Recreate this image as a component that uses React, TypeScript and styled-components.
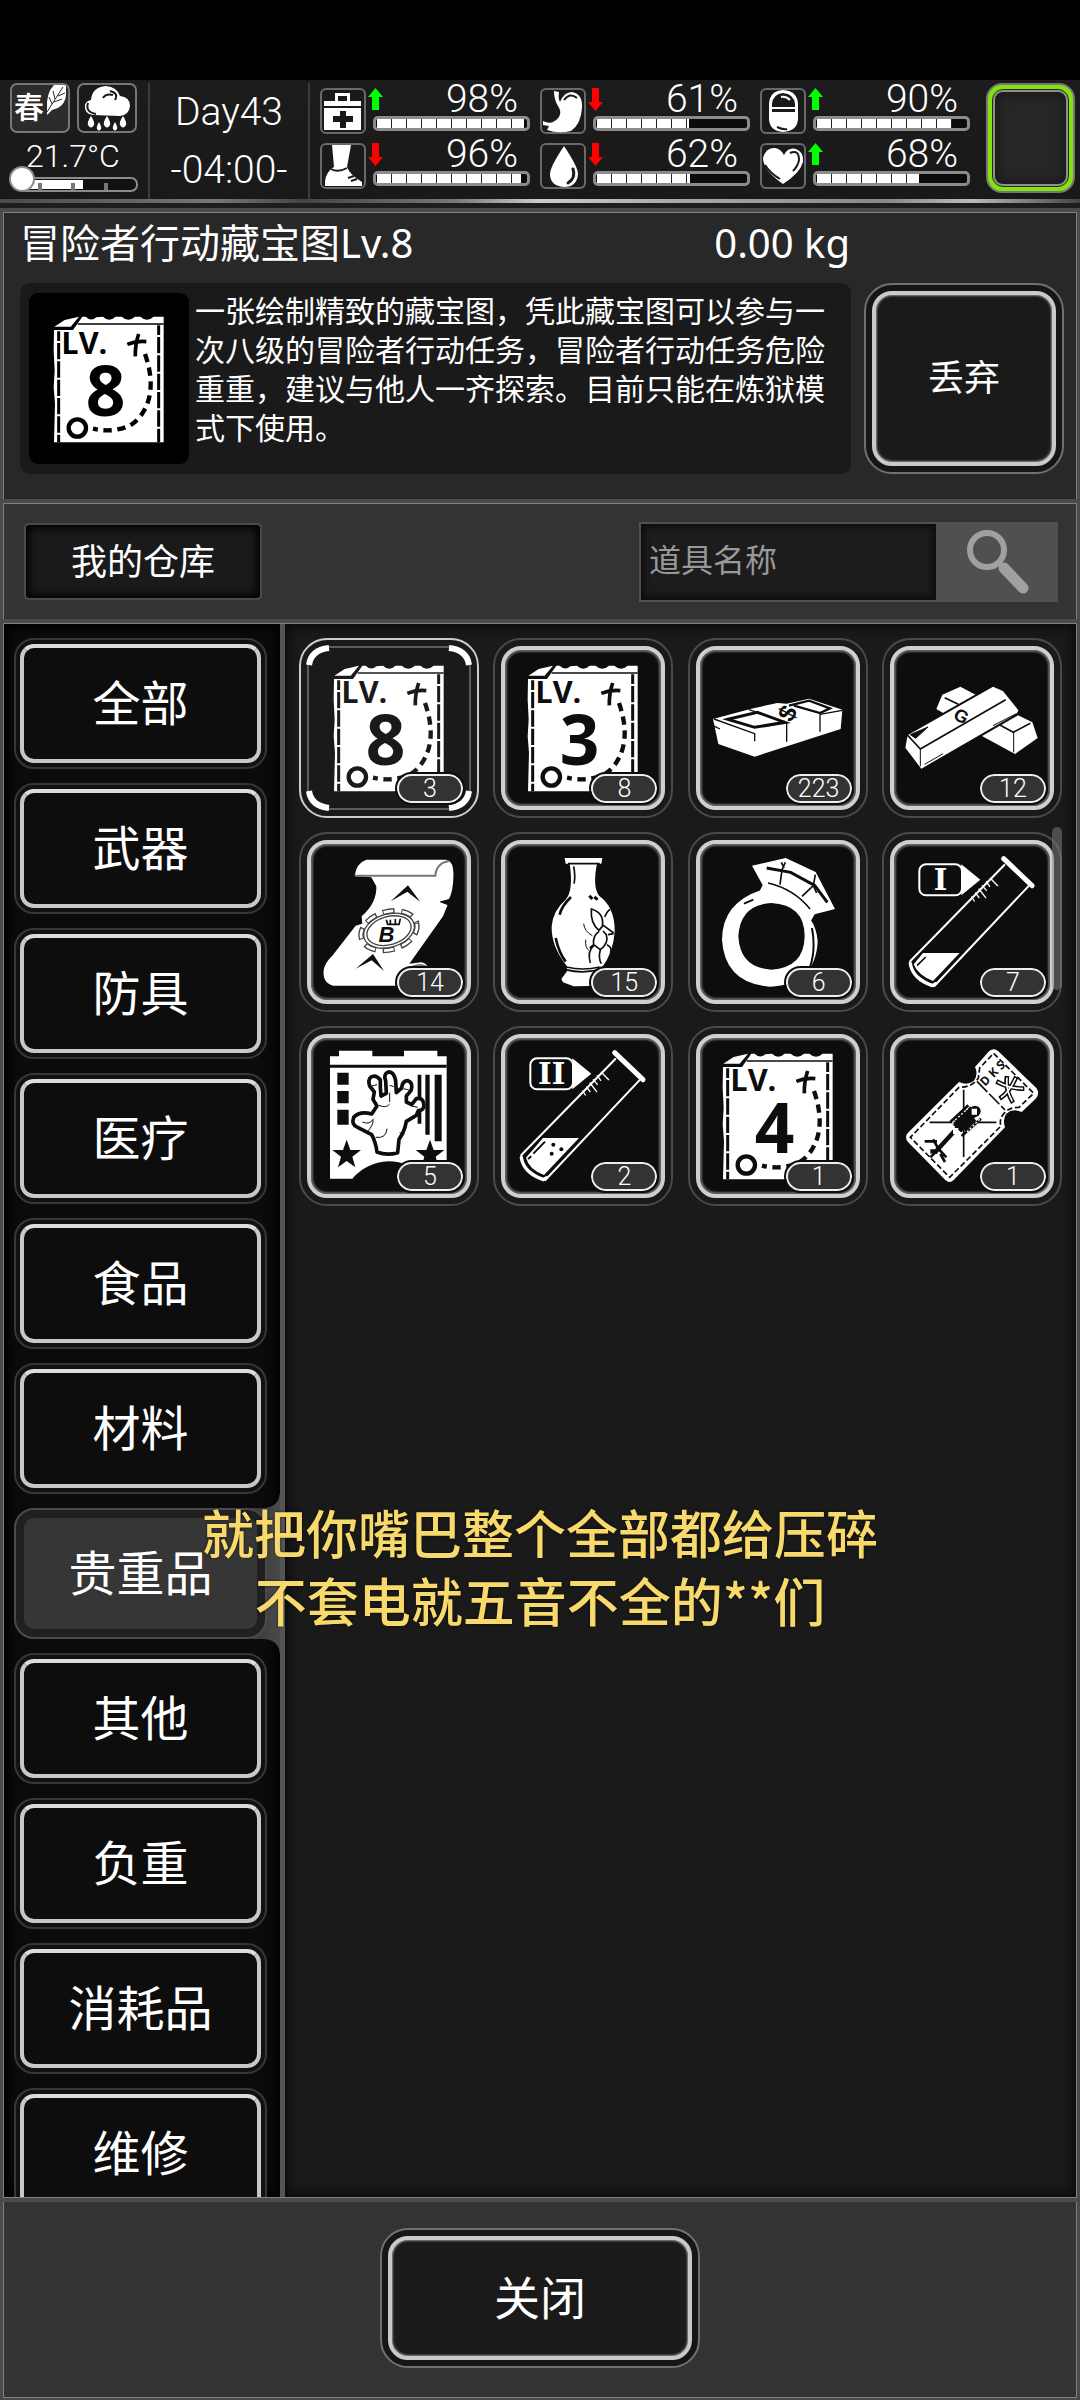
import React, { useState } from "react";
import styled, { createGlobalStyle, css } from "styled-components";

const GlobalStyle = createGlobalStyle`
  * { box-sizing: border-box; }
  html, body { margin: 0; background: #000; }
  body, button, input { font-family: "Noto Sans", "Noto Sans CJK SC", sans-serif; color: #fff; font-weight: 400; }
  button { padding: 0; margin: 0; border: 0; cursor: pointer; }
`;

const Screen = styled.div`
  height: 100vh;
  display: flex;
  flex-direction: column;
  background: #000;
  padding-top: 80px;
`;

/* ---------- status header ---------- */

const Header = styled.header`
  display: flex;
  gap: 10px;
  height: 119px;
  padding: 3px 5px 0 8px;
  background: linear-gradient(#1c1c1c, #191919);
`;

const HeaderEdge = styled.div`
  height: 9px;
  flex: none;
  border-bottom: 5px solid #1e1e1e;
  background: linear-gradient(90deg, #4a4a4a, #777 20%, #444 28%, #777 42%, #ccc 50%, #aaa 62%, #888 82%, #bbb 90%, #444);
`;

const Climate = styled.section`
  width: 130px;
  display: flex;
  flex-direction: column;
`;

const ClimateTiles = styled.div`
  display: flex;
  gap: 7px;
  padding-left: 2px;
`;

const ClimateTile = styled.div<{ $lit?: boolean }>`
  display: flex;
  align-items: center;
  width: 60px;
  height: 50px;
  border: 2px solid #777;
  border-radius: 7px;
  background: ${(p) => (p.$lit ? "#2c2c2c" : "#1a1a1a")};
  font-size: 30px;
  line-height: 40px;
  font-weight: 500;
  padding-left: ${(p) => (p.$lit ? "2px" : "0")};
  overflow: hidden;
  svg { flex: none; }
`;

const Season = styled.span`
  height: 46px;
  line-height: 44px;
`;

const Temperature = styled.div`
  height: 33px;
  text-align: center;
  font: 300 32px/46px Roboto, "Noto Sans", sans-serif;
`;

const Clock = styled.section`
  width: 162px;
  border: solid #3c3c3c;
  border-width: 0 2px;
  text-align: center;
  font: 300 39px/58px Roboto, "Noto Sans", sans-serif;
`;

const Stats = styled.section`
  display: grid;
  grid-template-columns: repeat(3, 211px);
  grid-auto-rows: 46px;
  column-gap: 9px;
  row-gap: 9px;
  padding-top: 5px;
`;

const Stat = styled.div`
  display: flex;
  gap: 2px;
`;

const StatIcon = styled.div`
  width: 46px;
  height: 46px;
  border: 2px solid #6a6a6a;
  border-radius: 6px;
  background: #1a1a1a;
  svg { display: block; margin: -2px; }
`;

const StatBody = styled.div`
  flex: 1;
  display: grid;
  grid-template-columns: 15px 1fr;
  align-content: start;
`;

const StatValue = styled.div`
  height: 28px;
  padding-left: 50px;
  text-align: center;
  font: 300 39px/23px Roboto, "Noto Sans", sans-serif;
`;

const Meter = styled.div`
  grid-column: 1 / -1;
  height: 15px;
  margin: 0 1px 0 5px;
  padding: 0 0 0 1px;
  border: 3px solid #8c8c8c;
  border-radius: 5px;
  background: #0c0c0c;
`;

const MeterFill = styled.div`
  height: 100%;
  background: repeating-linear-gradient(90deg, #fff 0 14px, #222 14px 15px);
`;

const EffectSlot = styled.div`
  width: 89px;
  height: 110px;
  margin-left: auto;
  padding: 5px;
  border: 2px solid #777;
  border-radius: 16px;
  background: #84e212;
  div {
    height: 100%;
    border: 2px solid #8f8f8f;
    outline: 1px solid #1f3008;
    border-radius: 10px;
    background: #262626;
    box-shadow: inset 0 0 12px #151515;
  }
`;

/* ---------- framed window ---------- */

const Frame = styled.main`
  flex: 1;
  min-height: 0;
  display: flex;
  flex-direction: column;
  gap: 4px;
  padding: 4px 3px 2px;
  background: #4b4b4b;
`;

const InfoPanel = styled.section`
  height: 287px;
  flex: none;
  display: flex;
  flex-direction: column;
  border: 1px solid #808080;
  border-bottom: 0;
  background: #282828;
  padding: 0 12px 0 16px;
`;

const InfoHeading = styled.div`
  display: flex;
  justify-content: space-between;
  width: 830px;
  height: 70px;
  font-size: 40px;
  line-height: 60px;
  h1 { margin: 0; font: inherit; }
`;

const InfoRow = styled.div`
  display: flex;
  gap: 13px;
`;

const Description = styled.div`
  flex: 1;
  display: flex;
  gap: 6px;
  height: 191px;
  padding: 8px 20px 8px 9px;
  border-radius: 10px;
  background: #1a1a1a;
  p { margin: 0; flex: 1; font-size: 30px; line-height: 39px; }
`;

const Thumb = styled.div`
  width: 160px;
  height: 171px;
  margin-top: 2px;
  flex: none;
  display: flex;
  align-items: center;
  justify-content: center;
  border-radius: 9px;
  background: #000;
  color: #000;
  svg { flex: none; }
`;

const RimButton = styled.button<{ $w: number; $h: number; $size: number }>`
  width: ${(p) => p.$w}px;
  height: ${(p) => p.$h}px;
  flex: none;
  padding: 6px;
  border: 2px solid #707070;
  border-radius: 28px;
  background: #161616;
  font-size: ${(p) => p.$size}px;
  span {
    display: flex;
    align-items: center;
    justify-content: center;
    height: 100%;
    padding-bottom: 6px;
    border: 4px solid #cacaca;
    border-radius: 20px;
    background: #1a1a1a;
    box-shadow: inset 0 0 2px 1px #888;
  }
`;

const Toolbar = styled.section`
  height: 116px;
  flex: none;
  display: flex;
  justify-content: space-between;
  align-items: center;
  border: 1px solid #808080;
  border-bottom: 0;
  background: #333;
  padding: 0 18px 0 20px;
`;

const StoreButton = styled.button`
  width: 238px;
  height: 77px;
  padding-bottom: 4px;
  border: 2px solid #4a4a4a;
  border-radius: 5px;
  background: #1a1a1a;
  box-shadow: inset 0 0 8px 3px #000;
  font-size: 36px;
`;

const Search = styled.form`
  display: flex;
  height: 80px;
`;

const SearchInput = styled.input`
  width: 297px;
  height: 80px;
  padding: 0 8px 4px;
  border: 2px solid #505050;
  border-right: 0;
  border-radius: 0;
  outline: 0;
  background: #1c1c1c;
  box-shadow: inset 0 0 6px 3px #0c0c0c;
  font-size: 32px;
  &::placeholder { color: #999; opacity: 1; }
`;

const SearchButton = styled.button`
  width: 122px;
  background: #505050;
  svg { display: block; }
`;

const Body = styled.section`
  flex: 1;
  min-height: 0;
  display: flex;
  border: 1px solid #808080;
`;

const Sidebar = styled.nav`
  width: 281px;
  flex: none;
  display: flex;
  flex-direction: column;
  gap: 14px;
  padding: 14px 0 0 10px;
  border-right: 5px solid #555;
  background: #0b0b0b;
  box-shadow: inset 0 0 12px 4px #000;
  overflow: hidden;
`;

const activeTab = css`
  border-color: #4a4a4a;
  background: #202020;
  padding: 8px;
  span { border: 0; background: #363636; border-radius: 10px; box-shadow: none; }
`;

/* The chosen tab flows into the divider through two concave corners. */
const activeRow = css`
  background: linear-gradient(90deg, transparent 230px, #3a3a3a 240px, #4a4a4a);
  &::before, &::after {
    content: "";
    position: absolute;
    right: 0;
    width: 14px;
    height: 14px;
  }
  &::before { bottom: 100%; background: radial-gradient(circle at 0 0, transparent 13px, #484848 14px); }
  &::after { top: 100%; background: radial-gradient(circle at 0 100%, transparent 13px, #484848 14px); }
`;

const TabRow = styled.div<{ $active: boolean }>`
  position: relative;
  height: 131px;
  flex: none;
  ${(p) => p.$active && activeRow}
`;

const Tab = styled.button<{ $active: boolean }>`
  width: 253px;
  height: 131px;
  padding: 4px;
  border: 2px solid #373737;
  border-radius: 20px;
  background: #111;
  font-size: 48px;
  span {
    display: flex;
    align-items: center;
    justify-content: center;
    height: 100%;
    padding-bottom: 8px;
    border: 4px solid #c8c8c8;
    border-top-color: #dcdcdc;
    border-radius: 14px;
    background: #0d0d0d;
  }
  ${(p) => p.$active && activeTab}
`;

const Store = styled.div`
  position: relative;
  flex: 1;
  padding: 14px 14px 0;
  background: #1a1a1a;
  box-shadow: inset 0 0 10px 4px #0c0c0c;
`;

const ItemGrid = styled.div`
  display: grid;
  grid-template-columns: repeat(4, 180px);
  justify-content: space-between;
  row-gap: 14px;
`;

const Slot = styled.button<{ $selected: boolean }>`
  position: relative;
  width: 180px;
  height: 180px;
  padding: 6px;
  border: 2px solid ${(p) => (p.$selected ? "#ccc" : "#4a4a4a")};
  border-radius: 28px;
  background: #1a1a1a;
  color: ${(p) => (p.$selected ? "#1a1a1a" : "#0d0d0d")};
  svg { position: absolute; inset: -2px; }
`;

const SlotFace = styled.span<{ $selected: boolean }>`
  display: block;
  height: 100%;
  border-radius: 20px;
  border: ${(p) => (p.$selected ? "2px solid #5c5c5c" : "4px solid #cfcfcf")};
  background: currentColor;
  box-shadow: ${(p) => (p.$selected ? "none" : "inset 0 0 2px 2px #666")};
`;

const Count = styled.span`
  position: absolute;
  right: 14px;
  bottom: 13px;
  width: 66px;
  height: 29px;
  border: 2px solid #eee;
  border-radius: 15px;
  outline: 2px solid #0d0d0d;
  background: #333;
  color: #fff;
  text-align: center;
  font: 300 25px/26px Roboto, "Noto Sans", sans-serif;
`;

const ScrollThumb = styled.div`
  position: absolute;
  top: 203px;
  right: 14px;
  width: 10px;
  height: 163px;
  border-radius: 5px;
  background: rgba(130, 130, 130, 0.5);
`;

const Footer = styled.footer`
  height: 196px;
  flex: none;
  display: flex;
  align-items: center;
  justify-content: center;
  border: 1px solid #808080;
  border-top: 0;
  background: #333;
  padding-bottom: 4px;
`;

const Caption = styled.p`
  position: fixed;
  left: 0;
  right: 0;
  top: 1498px;
  margin: 0;
  text-align: center;
  font-family: "Noto Sans CJK SC", sans-serif;
  font-size: 52px;
  line-height: 68px;
  font-weight: 500;
  color: #f8d96b;
  text-shadow: 0 0 3px rgba(0, 0, 0, 0.6);
  pointer-events: none;
`;

/* ---------- item drawings: 540-unit canvas, 3 units to a pixel ---------- */

const Art = ({ x, y, children }: { x: number; y: number; children: React.ReactNode }) => (
  <svg width="180" height="180" viewBox={`${x} ${y} 540 540`} fill="none" stroke="none" aria-hidden="true">
    {children}
  </svg>
);

const MapArt = ({ level }: { level: string }) => (
  <Art x={28} y={55}>
    <path fill="#fff" d="M133 178H190L218 138H228Q244 154 260 140L280 138Q298 156 318 138H336Q356 156 376 138H392Q412 156 432 138H462V515H133L136 400 132 350 135 300 132 240Z" />
    <path fill="#fff" d="M134 168L165 148 208 138 183 168Z" />
    <g stroke="currentColor">
      <path strokeWidth="5" d="M204 160H462" />
      <path strokeWidth="9" strokeDasharray="49 6" strokeDashoffset="20" d="M147 182V515M447 164V515" />
      <path strokeWidth="11" d="M353 221Q380 210 410 213M387 190Q376 222 377 257" />
      <path strokeWidth="13" strokeDasharray="25 17" d="M406 250Q434 330 416 390Q400 440 362 464Q310 488 250 474" />
      <circle cx="203" cy="472" r="26" strokeWidth="13" />
    </g>
    <g fill="currentColor" fontFamily="Open Sans, Noto Sans, sans-serif" fontWeight="700">
      <text x="155" y="250" fontSize="92">LV.</text>
      <text x="288" y="435" fontSize="208" textAnchor="middle">{level}</text>
    </g>
  </Art>
);

const CashArt = () => (
  <Art x={22} y={55}>
    <path fill="#fff" d="M97 298L212 267 290 250 318 252 385 237 485 270 480 328 222 411 113 373Z" />
    <g stroke="currentColor">
      <path strokeWidth="4" d="M100 298L222 342V365M97 318L118 328M318 308V366M418 284V336M418 284L485 272M205 270L305 305" />
      <path strokeWidth="9" d="M142 299L230 278 313 308 222 323Z" />
      <path strokeWidth="7" d="M325 258L385 243 448 266 418 280 340 258" />
    </g>
    <text x="320" y="306" transform="rotate(-62 320 280)" fill="currentColor" fontSize="74" textAnchor="middle" fontFamily="Liberation Sans, sans-serif" fontWeight="700">$</text>
  </Art>
);

const GoldArt = () => (
  <Art x={607} y={55}>
    <path fill="#fff" d="M770 268L788 225 842 201 888 225 1058 308 1074 355 1006 403 900 345Z" />
    <path fill="#fff" stroke="currentColor" strokeWidth="6" d="M674 385L681 345 940 198 972 212 1020 272 1012 285 724 451Z" />
    <g stroke="currentColor">
      <path strokeWidth="5" d="M722 388L978 240M682 345L722 388M795 234L836 254M962 317L1001 338 1052 311" />
      <path strokeWidth="3" d="M722 388V440M1002 340V398M735 434L790 402M1010 282L940 318" />
      <path strokeWidth="3" fill="currentColor" d="M692 345L745 322 708 356Z" />
    </g>
    <text x="845" y="308" transform="rotate(28 845 290)" fill="currentColor" fontSize="54" textAnchor="middle" fontFamily="Liberation Sans, sans-serif" fontWeight="700">G</text>
  </Art>
);

const ScrollArt = () => (
  <Art x={28} y={637}>
    <path fill="#fff" d="M195 769Q200 730 230 720H468Q494 722 491 775Q490 815 478 838L450 846 474 855 460 890 359 1032 395 1028Q412 1032 415 1044L320 1098H130Q98 1090 102 1052Q106 1028 128 1008L198 918 218 912 216 890Q262 850 260 800L245 773Z" />
    <path stroke="#777" strokeWidth="6" d="M196 768H437Q440 730 478 724M368 1042Q390 1030 412 1042" />
    <path fill="currentColor" d="M303 845L355 797 392 847 353 816ZM198 1047L250 1003 283 1054 246 1022ZM450 847L490 836 474 856Z" />
    <g transform="rotate(-16 298 933)" stroke="#444">
      <ellipse cx="298" cy="933" rx="86" ry="57" strokeWidth="16" strokeDasharray="36 20" />
      <ellipse cx="298" cy="933" rx="86" ry="57" strokeWidth="8" stroke="#fff" strokeDasharray="29 27" strokeDashoffset="-3" />
      <ellipse cx="298" cy="933" rx="78" ry="50" strokeWidth="4" />
      <ellipse cx="298" cy="933" rx="68" ry="42" strokeWidth="4" fill="#fff" />
    </g>
    <path stroke="currentColor" strokeWidth="5" d="M290 900L294 914H328L332 897M302 900V912M317 898V912" />
    <text x="290" y="966" fill="currentColor" fontSize="66" textAnchor="middle" fontFamily="Liberation Sans, sans-serif" fontWeight="700" fontStyle="italic">B</text>
  </Art>
);

const VaseArt = () => (
  <Art x={610} y={637}>
    <path fill="#fff" d="M825 715H938L935 732H922Q908 800 928 828Q976 862 975 935Q972 998 936 1045Q932 1065 950 1098L852 1100 820 1088 815 1078 832 1055V1040Q784 980 786 920Q790 872 828 840Q852 812 840 732H828Z" />
    <g stroke="currentColor">
      <path strokeWidth="5" d="M835 732H930M852 740Q858 770 853 792M828 1050Q880 1064 935 1048M830 1042Q880 1054 930 1042" />
      <path strokeWidth="8" d="M844 832Q815 860 810 885M798 955Q808 1000 828 1026" />
      <path strokeWidth="9" d="M899 828L908 838M914 832L924 840" />
      <path strokeWidth="5" d="M905 868Q945 880 938 920L928 932Q902 912 905 868ZM945 892Q955 870 962 870M938 915L972 940M928 935Q908 950 912 975Q925 985 932 990Q958 970 950 945L940 934M955 945L972 942M932 990Q925 1015 935 1032M952 975Q970 985 962 1000M912 978Q892 995 902 1030M912 975L900 985" />
      <path strokeWidth="3" d="M882 912Q884 935 908 948M888 960Q886 985 898 992" />
    </g>
  </Art>
);

const RingArt = () => (
  <Art x={22} y={637}>
    <path fill="#fff" fillRule="evenodd" d="M240 812Q125 850 124 960Q132 1090 268 1101Q405 1095 411 965Q408 925 390 900L340 840ZM272 850Q372 855 372 950Q370 1045 272 1050Q178 1045 173 950Q178 855 272 850Z" />
    <path fill="#fff" d="M214 738L315 715 405 757 463 868 402 884 386 912 330 850 236 816 246 796Z" />
    <g stroke="currentColor">
      <path strokeWidth="9" d="M258 745L330 758 402 797 440 848" />
      <path strokeWidth="5" d="M314 728L304 750 298 795M302 728L310 745M404 765L398 798 364 830M398 798L408 820" />
      <path strokeWidth="5" d="M262 790Q340 808 388 868" />
      <path strokeWidth="6" d="M190 852L218 840M394 925Q406 990 388 1042" />
    </g>
  </Art>
);

const TubeArt = ({ mark, level }: { mark: string; level: number }) => (
  <Art x={607} y={637}>
    <g stroke="#fff" strokeLinecap="round" strokeLinejoin="round">
      <path strokeWidth="15" d="M972 717L1057 798" />
      <path strokeWidth="6" d="M974 736L692 1024Q686 1066 764 1099L1046 800" />
      <path strokeWidth="10" d="M692 1032Q700 1078 758 1098L768 1092" />
      <path strokeWidth="4" d="M876 832L884 844M888 820L898 834M898 808L918 834M908 798L920 812M920 786L930 800M932 776L954 798" />
      <rect x="719" y="734" width="128" height="93" rx="20" strokeWidth="6" />
    </g>
    <path fill="#fff" d={level > 30 ? "M757 973H865L760 1084Q714 1066 706 1032Z" : "M730 1000H840L760 1084Q714 1066 702 1034Z"} />
    <path fill="#fff" d="M845 734L902 780 845 827Z" />
    {level > 30 ? (
      <>
        <path stroke="currentColor" strokeWidth="6" d="M763 984L728 1020M722 1028L712 1036" />
        <g fill="currentColor"><circle cx="788" cy="993" r="6" /><circle cx="812" cy="1007" r="6" /><circle cx="783" cy="1020" r="6" /></g>
      </>
    ) : (
      <path stroke="currentColor" strokeWidth="5" d="M738 1012L712 1038" />
    )}
    <text x="783" y="812" fill="#fff" fontSize="87" textAnchor="middle" fontFamily="DejaVu Serif, serif" fontWeight="700">{mark}</text>
  </Art>
);

const STAR = "M0 -44L11 -13 43 -13 17 7 26 39 0 20 -26 39 -17 7 -43 -13 -11 -13Z";

const PosterArt = () => (
  <Art x={28} y={52}>
    <path fill="#fff" d="M121 143H148V126H248V143H343V126H443V143H471V510H408Q360 458 296 458Q230 462 188 510H121Z" />
    <path fill="currentColor" d="M121 168H471V177H121ZM143 192H177V228H143ZM143 247H177V284H143ZM143 303H177V348H143ZM384 198H395V345H384ZM407 198H420V378H407ZM435 198H456V398H435Z" />
    <path fill="currentColor" transform="translate(171 437)" d={STAR} />
    <path fill="currentColor" transform="translate(421 437)" d={STAR} />
    <path fill="#fff" stroke="currentColor" strokeWidth="11" strokeLinejoin="round" d="M262 430Q292 442 324 432L328 392Q345 368 350 338L380 320 386 306Q406 304 402 285Q400 266 380 270L366 288 350 280 350 262 364 246Q372 222 355 216Q338 216 336 238L320 252 318 216Q312 188 296 190Q280 196 288 216L290 254 274 262 272 236 272 214Q258 196 243 206 234 216 240 232L254 250 250 272 262 292 246 316Q210 306 192 326Q184 348 204 356L246 378Q258 400 262 430Z" />
    <path stroke="currentColor" strokeWidth="3" d="M268 290Q290 300 300 286M300 230L312 234M246 232L262 228M342 240L358 244M218 340Q240 350 252 330M258 386Q290 390 292 360M300 252V280M330 372L344 378M366 292L384 296M230 372Q252 350 250 334" />
  </Art>
);

const TicketArt = () => (
  <Art x={607} y={52}>
    <path fill="#fff" d="M928 128Q942 116 956 128L1070 238Q1082 255 1068 270L1026 310Q1000 298 980 315Q968 332 976 356L822 514Q810 526 797 514L685 400Q673 385 685 372L838 220Q866 232 884 215Q896 195 886 175Z" />
    <g stroke="currentColor" strokeWidth="5">
      <path strokeDasharray="17 8" d="M942 134L1062 254 1018 296Q985 296 970 318Q958 335 964 352L810 506 692 386 838 236Q880 235 896 208L900 178Z" />
      <path strokeWidth="5" strokeDasharray="44 8" d="M892 218L976 304" />
      <path d="M852 243V445M750 341H950" />
      <path strokeWidth="34" d="M884 304L832 360" />
      <path strokeWidth="50" strokeLinecap="butt" d="M872 318L840 350" />
      <path strokeWidth="13" d="M835 356L765 432M752 428H774" />
      <path strokeWidth="8" d="M735 398L772 398M760 392L776 420L800 446M752 446L770 428M782 436L796 460M812 340L866 290M846 382L904 330" />
      <path strokeWidth="14" d="M950 218Q990 240 1034 240M1010 204Q990 250 960 270M982 202Q976 244 1000 282" />
      <path stroke="#fff" strokeWidth="5" d="M954 220Q990 240 1030 240M1008 208Q990 248 964 267M982 207Q978 244 998 278" />
      <path stroke="#fff" strokeWidth="4" strokeDasharray="6 6" d="M818 342L864 300M862 370L900 332" />
    </g>
    <circle cx="886" cy="308" r="17" fill="currentColor" />
    <path fill="#fff" d="M876 300H892V318H876ZM820 358H836V376H820Z" />
    <text x="940" y="206" transform="rotate(-45 940 195)" fill="currentColor" fontSize="36" textAnchor="middle" fontFamily="Noto Sans, sans-serif" fontWeight="700">D K S</text>
  </Art>
);

/* ---------- status drawings ---------- */

const Glyph = ({ children }: { children: React.ReactNode }) => (
  <svg width="46" height="46" viewBox="0 0 46 46" fill="#fff" aria-hidden="true">{children}</svg>
);

const statGlyphs: Record<string, React.ReactNode> = {
  health: <><path d="M15 13V5H30V13H41V18H4V13ZM18 8V13H27V8Z" fillRule="evenodd" /><path fillRule="evenodd" d="M4 20H41V42H4ZM20 23V28H13V34H20V40H26V34H33V28H26V23Z" /></>,
  stomach: <><path d="M14 3L19 4Q18 10 20 14Q24 4 32 4Q43 6 42 20Q41 36 31 43Q18 46 7 42L9 38 3 37V33Q12 38 19 29Q22 24 18 18Q14 12 14 3Z" /><path d="M24 12Q30 4 37 10" stroke="#1a1a1a" strokeWidth="2" fill="none" /></>,
  mind: <><path d="M9 17Q9 3 23 2Q38 3 38 17V30Q38 43 23 44Q9 43 9 30Z" /><path fill="#1a1a1a" d="M12 19V16Q13 6 23 5Q34 6 35 16V19ZM12 21H35V24H12Z" /><path d="M21 9Q26 8 30 12" stroke="#fff" strokeWidth="2" fill="none" /><path d="M17 39Q23 42 27 41" stroke="#1a1a1a" strokeWidth="2" fill="none" /></>,
  foot: <><path d="M12 2H31L27 24Q30 32 42 39V43H5Q4 33 11 26L14 24Z" /><path d="M11 26Q18 30 27 25M28 35L34 33M31 38L37 36" stroke="#1a1a1a" strokeWidth="2" fill="none" /></>,
  water: <><path d="M24 3Q38 24 38 31Q37 44 24 44Q10 43 10 31Q10 24 24 3Z" /><path d="M33 26Q36 35 28 40" stroke="#1a1a1a" strokeWidth="3" fill="none" strokeLinecap="round" /></>,
  heart: <><path d="M23 41Q3 27 3 15Q6 4 15 5Q21 6 24 12Q28 4 36 6Q44 9 43 19Q40 30 23 41Z" /><path d="M30 10Q39 6 39 17Q38 23 33 28M5 22Q10 30 20 36" stroke="#1a1a1a" strokeWidth="2" fill="none" /></>,
};

const Arrow = ({ up }: { up: boolean }) => (
  <svg width="15" height="23" viewBox="0 0 15 23" aria-hidden="true">
    {up ? <path fill="#0f0" d="M7.5 0L15 9H11V22H4V9H0Z" /> : <path fill="#f00" d="M7.5 23L15 14H11V0H4V14H0Z" />}
  </svg>
);

const stats = [
  { name: "health", up: true, value: 98 },
  { name: "stomach", up: false, value: 61 },
  { name: "mind", up: true, value: 90 },
  { name: "foot", up: false, value: 96 },
  { name: "water", up: false, value: 62 },
  { name: "heart", up: true, value: 68 },
];

const categories = ["全部", "武器", "防具", "医疗", "食品", "材料", "贵重品", "其他", "负重", "消耗品", "维修"];

const items = [
  { art: <MapArt level="8" />, count: 3 },
  { art: <MapArt level="3" />, count: 8 },
  { art: <CashArt />, count: 223 },
  { art: <GoldArt />, count: 12 },
  { art: <ScrollArt />, count: 14 },
  { art: <VaseArt />, count: 15 },
  { art: <RingArt />, count: 6 },
  { art: <TubeArt mark="I" level={20} />, count: 7 },
  { art: <PosterArt />, count: 5 },
  { art: <TubeArt mark="II" level={40} />, count: 2 },
  { art: <MapArt level="4" />, count: 1 },
  { art: <TicketArt />, count: 1 },
];

export default function App() {
  const [category, setCategory] = useState("贵重品");
  const [selected, setSelected] = useState(0);

  return (
    <Screen>
      <GlobalStyle />
      <Header>
        <Climate>
          <ClimateTiles>
            <ClimateTile $lit>
              <Season>春</Season>
              <svg width="24" height="46" viewBox="0 0 24 46" aria-hidden="true">
                <path fill="#fff" d="M3 24Q2 8 10 0H22V10Q21 22 8 25L3 30Z" />
                <path stroke="#2c2c2c" strokeWidth="1" fill="none" d="M3 27L19 2M8 19L5 12M11 14L9 6M10 17L18 14M14 11L21 8" />
              </svg>
            </ClimateTile>
            <ClimateTile>
              <svg width="56" height="46" viewBox="0 0 56 46" aria-hidden="true">
                <path fill="#fff" d="M14 30Q5 29 6 20Q7 16 12 15Q13 2 27 1Q38 2 41 11Q51 12 51 21Q50 30 41 31Z" />
                <path stroke="#1a1a1a" strokeWidth="2" fill="none" d="M31 6Q40 8 36 15M9 18Q6 27 17 29M24 13Q27 8 34 10" />
                <path fill="#fff" d="M12 31Q16 37 15 40Q12 45 9 40Q8 37 12 31ZM28 31Q32 37 31 40Q28 45 25 40Q24 37 28 31ZM44 31Q48 37 47 40Q44 45 41 40Q40 37 44 31ZM20 37Q23 42 22 44Q20 47 18 44Q17 42 20 37ZM36 37Q39 42 38 44Q36 47 34 44Q33 42 36 37Z" />
              </svg>
            </ClimateTile>
          </ClimateTiles>
          <Temperature>21.7°C</Temperature>
          <svg width="130" height="28" viewBox="0 0 130 28" aria-hidden="true">
            <rect x="12" y="12" width="117" height="13" rx="6" fill="#111" stroke="#8c8c8c" strokeWidth="2" />
            <path fill="#fff" d="M14 14H75V23H14Z" />
            <circle cx="14" cy="13" r="12" fill="#fff" stroke="#8c8c8c" strokeWidth="2" />
            <path stroke="#777" strokeWidth="4" d="M32 17V24M65 17V24M98 17V24" />
          </svg>
        </Climate>
        <Clock>
          <div>Day43</div>
          <div>-04:00-</div>
        </Clock>
        <Stats>
          {stats.map((s) => (
            <Stat key={s.name}>
              <StatIcon><Glyph>{statGlyphs[s.name]}</Glyph></StatIcon>
              <StatBody>
                <Arrow up={s.up} />
                <StatValue>{s.value}%</StatValue>
                <Meter role="meter" aria-label={s.name} aria-valuenow={s.value}>
                  <MeterFill style={{ width: `${s.value}%` }} />
                </Meter>
              </StatBody>
            </Stat>
          ))}
        </Stats>
        <EffectSlot><div /></EffectSlot>
      </Header>
      <HeaderEdge />

      <Frame>
        <InfoPanel>
          <InfoHeading>
            <h1>冒险者行动藏宝图Lv.8</h1>
            <div>0.00 kg</div>
          </InfoHeading>
          <InfoRow>
            <Description>
              <Thumb><MapArt level="8" /></Thumb>
              <p>一张绘制精致的藏宝图，凭此藏宝图可以参与一次八级的冒险者行动任务，冒险者行动任务危险重重，建议与他人一齐探索。目前只能在炼狱模式下使用。</p>
            </Description>
            <RimButton $w={200} $h={191} $size={36}><span>丢弃</span></RimButton>
          </InfoRow>
        </InfoPanel>

        <Toolbar>
          <StoreButton>我的仓库</StoreButton>
          <Search onSubmit={(e) => e.preventDefault()}>
            <SearchInput placeholder="道具名称" aria-label="道具名称" />
            <SearchButton type="submit" aria-label="搜索">
              <svg width="122" height="80" viewBox="0 0 122 80" fill="none" stroke="#a0a0a0" aria-hidden="true">
                <circle cx="51" cy="28" r="17" strokeWidth="6" />
                <path strokeWidth="11" strokeLinecap="round" d="M68 46L87 66" />
              </svg>
            </SearchButton>
          </Search>
        </Toolbar>

        <Body>
          <Sidebar>
            {categories.map((c) => (
              <TabRow key={c} $active={c === category}>
                <Tab $active={c === category} onClick={() => setCategory(c)}><span>{c}</span></Tab>
              </TabRow>
            ))}
          </Sidebar>
          <Store>
            <ItemGrid>
              {items.map((item, i) => (
                <Slot key={i} $selected={i === selected} onClick={() => setSelected(i)}>
                  <SlotFace $selected={i === selected} />
                  {item.art}
                  {i === selected && (
                    <svg width="180" height="180" viewBox="0 0 180 180" fill="none" stroke="#fff" strokeWidth="6" aria-hidden="true">
                      <path d="M10 27Q12 12 30 10M150 10Q168 12 170 27M170 153Q168 168 150 170M30 170Q12 168 10 153" />
                    </svg>
                  )}
                  <Count>{item.count}</Count>
                </Slot>
              ))}
            </ItemGrid>
            <ScrollThumb />
          </Store>
        </Body>

        <Footer>
          <RimButton $w={320} $h={140} $size={46}><span>关闭</span></RimButton>
        </Footer>
      </Frame>

      <Caption>
        就把你嘴巴整个全部都给压碎
        <br />
        不套电就五音不全的**们
      </Caption>
    </Screen>
  );
}
